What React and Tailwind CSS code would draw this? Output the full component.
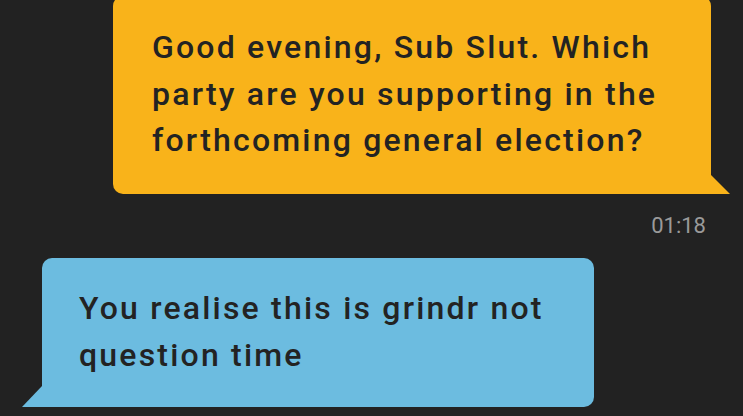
export default function App() {
  return (
    <div className="w-[743px] h-[416px] overflow-hidden bg-[#222222] flex flex-col font-['Roboto',sans-serif]">
      {/* outgoing message */}
      <div className="self-end mr-[32px] -mt-[4px] relative w-[598px]">
        <div className="bg-[#F9B31A] rounded-[10px] rounded-br-none pl-[39px] pr-[10px] pt-[28px] pb-[30px] text-[#232323] text-[32px] font-medium tracking-[2.2px] leading-[46.5px]">
          Good evening, Sub Slut. Which
          <br />
          party are you supporting in the
          <br />
          forthcoming general election?
        </div>
        <svg
          className="absolute right-[-19px] bottom-0"
          width="19"
          height="19"
          viewBox="0 0 19 19"
        >
          <polygon points="0,0 19,19 0,19" fill="#F9B31A" />
        </svg>
      </div>

      <div className="self-end mr-[37px] mt-[19px] text-[22px] leading-[26px] text-[#9a9a9a]">
        01:18
      </div>

      {/* incoming message */}
      <div className="ml-[42px] mt-[19px] relative w-[552px]">
        <div className="bg-[#6CBCE0] rounded-[10px] rounded-bl-none pl-[37px] pr-[10px] pt-[27px] pb-[28px] text-[#232323] text-[32px] font-medium tracking-[2.2px] leading-[47px]">
          You realise this is grindr not
          <br />
          question time
        </div>
        <svg
          className="absolute left-[-20px] bottom-0"
          width="20"
          height="21"
          viewBox="0 0 20 21"
        >
          <polygon points="20,0 20,21 0,21" fill="#6CBCE0" />
        </svg>
      </div>
    </div>
  );
}
